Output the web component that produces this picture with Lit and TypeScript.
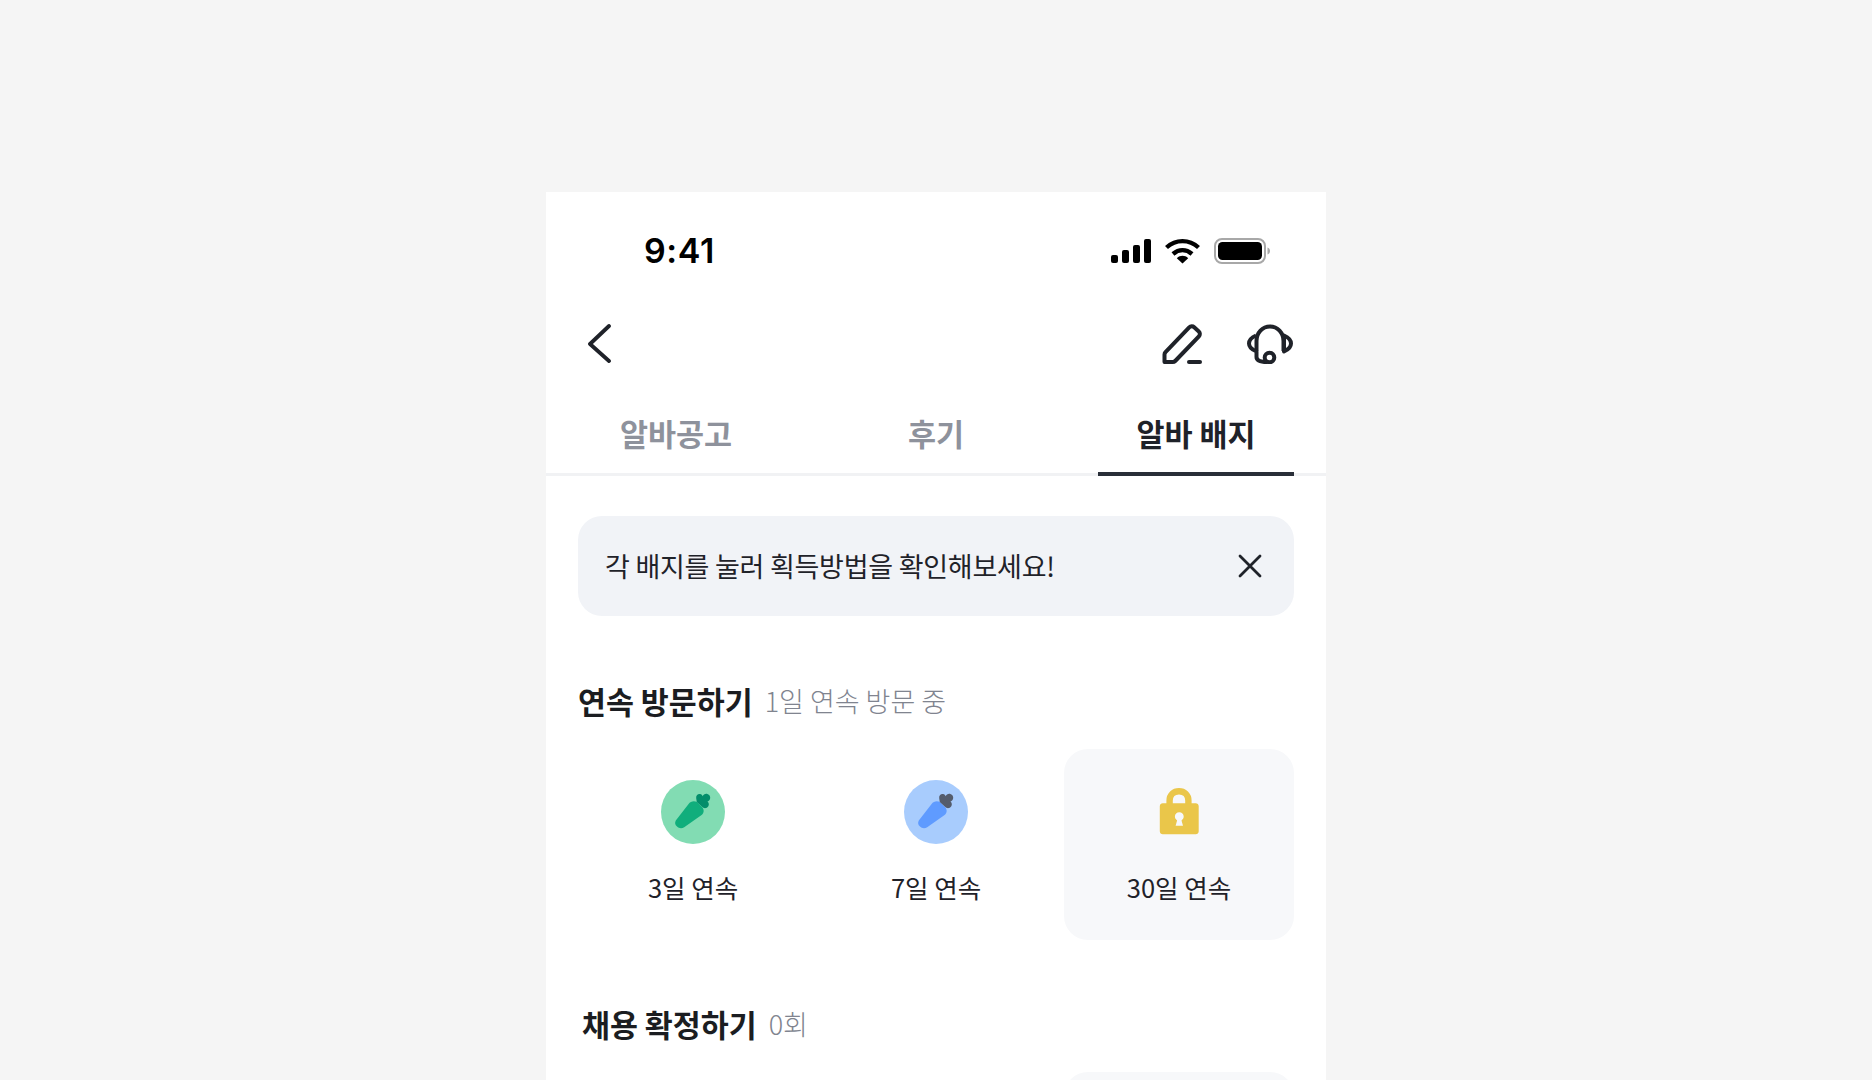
import { LitElement, html, css, svg } from "lit";
import { customElement } from "lit/decorators.js";

const carrot = (bg: string, body: string, leaf: string) => html`<svg class="badge-icon" width="64" height="64" viewBox="0 0 64 64">
  <circle cx="32" cy="32" r="32" fill=${bg}></circle>
  <path fill=${body} d="M27.6 24C29.4 21.2 33 20.4 35.6 21.8L41 27C43.4 29.6 43.2 33 40.6 35L23.2 47.2C20.8 48.8 18 48.4 16 46.6C14 44.8 13.6 42.6 14.8 40.4Z"></path>
  <path fill=${leaf} d="M35.2 18.2C34.8 15.4 36.9 13.6 39.1 14.1C40.4 14.4 41.3 15.2 41.7 16.2C42.3 14.4 44.4 13.4 46.4 14C49.2 14.8 50.1 18.2 48.3 20.2C47.8 20.8 47.2 21.2 46.5 21.4C47.9 22.4 48.3 24.6 47.3 26.3C46 28.6 42.6 28.8 41 26.8L35.8 22Z"></path>
</svg>`;

const lock = html`<svg class="badge-icon" width="64" height="64" viewBox="0 0 64 64">
  <path fill="none" stroke="#EAC64A" stroke-width="6.4" d="M22.6 26V20.4C22.6 14.8 26.6 11.2 32 11.2C37.4 11.2 41.4 14.8 41.4 20.4V26"></path>
  <path fill="#EAC64A" fill-rule="evenodd" d="M15.8 23.3H48.7C50.4 23.3 51.7 24.6 51.7 26.3V51.3C51.7 53 50.4 54.3 48.7 54.3H15.8C14.1 54.3 12.8 53 12.8 51.3V26.3C12.8 24.6 14.1 23.3 15.8 23.3ZM32.3 32.3C29.8 32.3 27.9 34.2 27.9 36.6C27.9 38.2 28.8 39.6 30.1 40.4L28.6 45.7H36L34.5 40.4C35.8 39.6 36.7 38.2 36.7 36.6C36.7 34.2 34.8 32.3 32.3 32.3Z"></path>
</svg>`;

const ic = (body: unknown, w: number, h: number, cls: string) => html`<svg class=${cls} width=${w} height=${h} viewBox="0 0 ${w} ${h}" fill="none">${body}</svg>`;

@customElement("app-root")
export class AppRoot extends LitElement {
  static styles = css`
    :host {
      display: block;
      height: 1080px;
      overflow: hidden;
      background: #f5f5f5;
      font-family: "Noto Sans CJK KR", "Noto Sans", sans-serif;
      color: #1b1d21;
    }
    .phone {
      width: 780px;
      height: 888px;
      margin: 192px auto 0;
      background: #fff;
      overflow: hidden;
    }
    .status {
      height: 112px;
      box-sizing: border-box;
      padding: 6px 55px 0 98px;
      display: flex;
      align-items: center;
      justify-content: space-between;
    }
    .time {
      font-family: Inter, "Liberation Sans", sans-serif;
      font-size: 34px;
      font-weight: 600;
      letter-spacing: 0.6px;
      color: #000;
      line-height: 40px;
    }
    .status-icons {
      display: flex;
      align-items: center;
      gap: 14px;
    }
    .nav {
      height: 80px;
      padding: 0 33px 0 42px;
      display: flex;
      align-items: center;
      justify-content: space-between;
    }
    .back {
      margin-top: -1px;
    }
    .nav-right {
      display: flex;
      align-items: center;
      gap: 45px;
    }
    .tabs {
      height: 92px;
      box-sizing: border-box;
      padding: 0 32px;
      display: flex;
      justify-content: space-between;
      border-bottom: 3px solid #f1f2f4;
    }
    .tab {
      width: 196px;
      height: 92px;
      box-sizing: border-box;
      text-align: center;
      font-size: 30.5px;
      font-weight: 700;
      line-height: 40px;
      padding-top: 29px;
      color: #8e929c;
      white-space: nowrap;
    }
    .tab.active {
      color: #1f2229;
      border-bottom: 4px solid #292e38;
    }
    .content {
      padding: 40px 32px 0;
    }
    .banner {
      height: 100px;
      box-sizing: border-box;
      border-radius: 24px;
      background: #f1f3f7;
      padding: 0 32px 0 27px;
      margin-bottom: 67px;
      display: flex;
      align-items: center;
      justify-content: space-between;
    }
    .banner span {
      font-size: 27px;
      line-height: 36px;
      font-weight: 400;
      color: #1f2229;
      letter-spacing: -0.25px;
    }
    .section + .section {
      margin-top: 66px;
    }
    .head {
      display: flex;
      align-items: center;
      gap: 12px;
      height: 36px;
      line-height: 36px;
    }
    .head.inset {
      padding-left: 4px;
    }
    .head b {
      font-size: 30.4px;
      font-weight: 700;
      color: #1b1d21;
    }
    .head span {
      font-size: 27px;
      font-weight: 300;
      color: #80848f;
    }
    .badges {
      display: grid;
      grid-template-columns: repeat(3, 230px);
      justify-content: space-between;
      margin-top: 30px;
    }
    .badge {
      height: 191px;
      box-sizing: border-box;
      padding-top: 31px;
      border-radius: 24px;
      display: flex;
      flex-direction: column;
      align-items: center;
    }
    .badge.locked {
      background: #f7f8fa;
    }
    .badge-icon {
      display: block;
    }
    .badge p {
      margin: 23px 0 0;
      font-size: 25.5px;
      line-height: 40px;
      color: #1f2229;
      font-weight: 400;
    }
  `;

  render() {
    return html`<div class="phone">
      <div class="status">
        <span class="time">9:41</span>
        <div class="status-icons">
          ${ic(svg`<rect x="0" y="16" width="7" height="8" rx="2" fill="#000"></rect>
            <rect x="11" y="11" width="7" height="13" rx="2" fill="#000"></rect>
            <rect x="22" y="6" width="7" height="18" rx="2" fill="#000"></rect>
            <rect x="33" y="0" width="7" height="24" rx="2" fill="#000"></rect>`, 40, 24, "sig")}
          ${ic(svg`<path d="M1.5 9.5C10.8 1 24.2 1 33.5 9.5" stroke="#000" stroke-width="4.4"></path>
            <path d="M8 16C13.8 10.8 21.2 10.8 27 16" stroke="#000" stroke-width="4.4"></path>
            <path d="M11.8 20.2C15.2 17 19.8 17 23.2 20.2L17.5 25.5Z" fill="#000"></path>`, 35, 26, "wifi")}
          ${ic(svg`<rect x="1" y="1" width="50" height="24" rx="7" stroke="#a8a8a8" stroke-width="2"></rect>
            <rect x="4" y="4" width="44" height="18" rx="4.5" fill="#000"></rect>
            <path d="M53.5 9.5C55 10 56 11.4 56 13C56 14.6 55 16 53.5 16.5Z" fill="#a8a8a8"></path>`, 57, 26, "bat")}
        </div>
      </div>
      <div class="nav">
        ${ic(svg`<path d="M21 2L2 20L21 37" stroke="#1f2229" stroke-width="3.8" stroke-linecap="round" stroke-linejoin="round"></path>`, 24, 39, "back")}
        <div class="nav-right">
          ${ic(svg`<path d="M2.5 38V30.5C2.5 29.6 2.9 28.8 3.5 28.1L27.2 3.4C28.6 2 30.8 2 32.2 3.3L36.8 7.4C38.2 8.7 38.2 10.9 36.9 12.3L13.2 37C12.5 37.7 11.6 38 10.7 38Z" stroke="#1f2229" stroke-width="4" stroke-linejoin="round"></path>
            <path d="M27 38H38" stroke="#1f2229" stroke-width="4" stroke-linecap="round"></path>`, 40, 40, "pen")}
          ${ic(svg`<path d="M9.5 27V17C9.5 8.5 15.5 2.5 23 2.5C30.5 2.5 36.5 8.5 36.5 17V27" stroke="#1f2229" stroke-width="4"></path>
            <path d="M9 11.5C4.5 13.5 2 16.5 2 19.5C2 22.5 4.5 25.5 9.5 27.5V33C9.5 36.5 13 38 20 38" stroke="#1f2229" stroke-width="4" stroke-linejoin="round"></path>
            <path d="M37 11.5C41.5 13.5 44 16.5 44 19.5C44 22.5 41.5 25.5 37 27.5Z" stroke="#1f2229" stroke-width="4" stroke-linejoin="round"></path>
            <circle cx="22.5" cy="33.5" r="4.8" stroke="#1f2229" stroke-width="4"></circle>`, 46, 40, "head-ic")}
        </div>
      </div>
      <div class="tabs">
        <div class="tab">알바공고</div>
        <div class="tab">후기</div>
        <div class="tab active">알바 배지</div>
      </div>
      <div class="content">
        <div class="banner">
          <span>각 배지를 눌러 획득방법을 확인해보세요!</span>
          ${ic(svg`<path d="M2 2L22 22M22 2L2 22" stroke="#1f2229" stroke-width="2.8" stroke-linecap="round"></path>`, 24, 24, "x")}
        </div>
        <div class="section">
          <div class="head"><b>연속 방문하기</b><span>1일 연속 방문 중</span></div>
          <div class="badges">
            <div class="badge">${carrot("#82DCB3", "#10AE7C", "#038D6A")}<p>3일 연속</p></div>
            <div class="badge">${carrot("#A8CCFD", "#5F9BFF", "#545C6C")}<p>7일 연속</p></div>
            <div class="badge locked">${lock}<p>30일 연속</p></div>
          </div>
        </div>
        <div class="section">
          <div class="head inset"><b>채용 확정하기</b><span>0회</span></div>
          <div class="badges">
            <div class="badge"></div>
            <div class="badge"></div>
            <div class="badge locked"></div>
          </div>
        </div>
      </div>
    </div>`;
  }
}
